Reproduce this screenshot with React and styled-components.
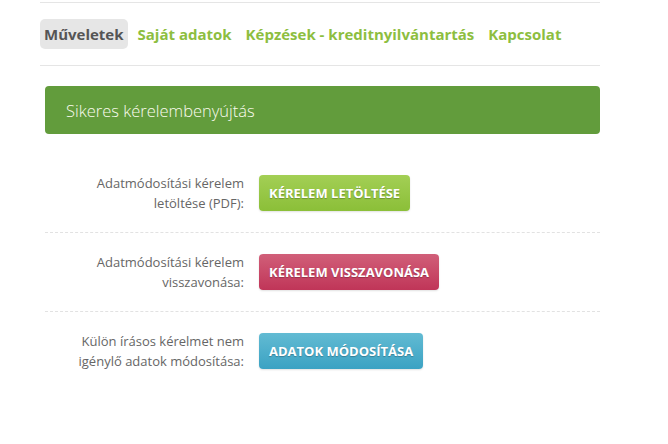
import { createGlobalStyle, styled, css } from "styled-components";

const GlobalStyle = createGlobalStyle`
  * { box-sizing: border-box; }
  body {
    margin: 0;
    background: #fff;
    font-family: "Open Sans", "Liberation Sans", sans-serif;
  }
`;

const Page = styled.div`
  width: 560px;
  margin-left: 40px;
  padding-top: 2px;
`;

const Nav = styled.nav`
  display: flex;
  align-items: center;
  gap: 6px;
  border-top: 1px solid #e5e5e5;
  border-bottom: 1px solid #e5e5e5;
  padding: 16px 0 16px;
`;

const NavItem = styled.a`
  font-size: 15px;
  font-weight: 700;
  line-height: 20px;
  padding: 5px 4px;
  border-radius: 5px;
  color: #8dbe3f;
  text-decoration: none;

  ${(p) =>
    p.$active &&
    css`
      background: #e6e6e6;
      color: #555;
    `}
`;

const Content = styled.div`
  padding-left: 5px;
`;

const Banner = styled.div`
  margin-top: 20px;
  height: 48px;
  background: #629c3c;
  border-radius: 4px;
  display: flex;
  align-items: center;
  padding-left: 21px;
  color: #fbfbef;
  font-size: 16.5px;
  font-weight: 300;
`;

const List = styled.div`
  margin-top: 20px;
`;

const Row = styled.div`
  display: grid;
  grid-template-columns: 199px auto;
  column-gap: 15px;
  align-items: center;
  padding: 19px 0;
  border-bottom: 1px dashed #e2e2e2;

  &:last-child {
    border-bottom: none;
  }
`;

const Label = styled.div`
  text-align: right;
  font-size: 13px;
  line-height: 20px;
  color: #666;
`;

const palette = {
  green: ["#a3cf55", "#8bbf38"],
  red: ["#d15f79", "#c03558"],
  blue: ["#62bbd3", "#3ba2c3"],
};

const Button = styled.button`
  justify-self: start;
  height: 36px;
  padding: 0 10px;
  border: none;
  border-radius: 4px;
  font-family: inherit;
  font-size: 13px;
  font-weight: 700;
  color: #fff;
  text-transform: uppercase;
  text-shadow: 0 1px 1px rgba(0, 0, 0, 0.25);
  background: linear-gradient(
    to bottom,
    ${(p) => palette[p.$tone][0]},
    ${(p) => palette[p.$tone][1]}
  );
  box-shadow: 0 1px 2px rgba(0, 0, 0, 0.12);
  cursor: pointer;
`;

const rows = [
  { label: ["Adatmódosítási kérelem", "letöltése (PDF):"], button: "Kérelem letöltése", tone: "green" },
  { label: ["Adatmódosítási kérelem", "visszavonása:"], button: "Kérelem visszavonása", tone: "red" },
  { label: ["Külön írásos kérelmet nem", "igénylő adatok módosítása:"], button: "Adatok módosítása", tone: "blue" },
];

export default function App() {
  return (
    <>
      <GlobalStyle />
      <Page>
        <Nav>
          <NavItem $active>Műveletek</NavItem>
          <NavItem>Saját adatok</NavItem>
          <NavItem>Képzések - kreditnyilvántartás</NavItem>
          <NavItem>Kapcsolat</NavItem>
        </Nav>

        <Content>
          <Banner>Sikeres kérelembenyújtás</Banner>

          <List>
            {rows.map((r) => (
              <Row key={r.button}>
                <Label>
                  {r.label[0]}
                  <br />
                  {r.label[1]}
                </Label>
                <Button type="button" $tone={r.tone}>
                  {r.button}
                </Button>
              </Row>
            ))}
          </List>
        </Content>
      </Page>
    </>
  );
}
